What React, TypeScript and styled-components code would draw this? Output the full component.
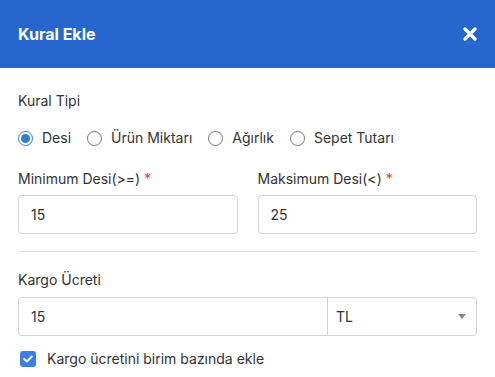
import React, { useState } from 'react';
import styled, { createGlobalStyle } from 'styled-components';

const GlobalStyle = createGlobalStyle`
  * { box-sizing: border-box; }
  body {
    margin: 0;
    background: #fff;
    font-family: Inter, "Noto Sans", Arial, sans-serif;
    color: #333;
  }
`;

const Modal = styled.div`
  width: 495px;
  height: 377px;
  overflow: hidden;
  background: #fff;
`;

const Header = styled.header`
  height: 68px;
  background: #2767cd;
  display: flex;
  align-items: center;
  justify-content: space-between;
  padding: 0 18px;
  color: #fff;
`;

const Title = styled.h2`
  margin: 0;
  font-size: 16px;
  font-weight: 700;
`;

const CloseButton = styled.button`
  all: unset;
  display: flex;
  width: 14px;
  height: 14px;
  cursor: pointer;
`;

const Body = styled.div`
  padding: 24px 18px 0;
`;

const FieldLabel = styled.div<{ $gap?: number }>`
  font-size: 14px;
  line-height: 18px;
  color: #333;
  margin-bottom: ${(p) => p.$gap ?? 8}px;
`;

const Required = styled.span`
  color: #e0393e;
  margin-left: 4px;
`;

const RadioRow = styled.div`
  display: flex;
  gap: 16px;
  margin-top: 19px;
  margin-bottom: 23px;
`;

const RadioOption = styled.label`
  display: flex;
  align-items: center;
  gap: 9px;
  font-size: 14px;
  line-height: 18px;
  cursor: pointer;
`;

const RadioCircle = styled.span<{ $checked: boolean }>`
  width: 15px;
  height: 15px;
  border-radius: 50%;
  border: 1px solid ${(p) => (p.$checked ? '#2f7de1' : '#777')};
  display: flex;
  align-items: center;
  justify-content: center;
  &::after {
    content: '';
    width: 9px;
    height: 9px;
    border-radius: 50%;
    background: ${(p) => (p.$checked ? '#2f7de1' : 'transparent')};
  }
`;

const TwoCols = styled.div`
  display: grid;
  grid-template-columns: 1fr 1fr;
  column-gap: 20px;
`;

const Field = styled.div``;

const TextInput = styled.input`
  width: 100%;
  height: 39px;
  border: 1px solid #d3d3d3;
  border-radius: 4px;
  padding: 0 12px;
  font: inherit;
  font-size: 14px;
  color: #333;
  outline: none;
`;

const Divider = styled.hr`
  border: 0;
  border-top: 1px solid #e2e2e2;
  margin: 17px 0 19px;
`;

const InputGroup = styled.div`
  display: flex;
  height: 39px;
  border: 1px solid #d3d3d3;
  border-radius: 4px;
`;

const GroupInput = styled.input`
  flex: 0 0 309px;
  border: 0;
  border-right: 1px solid #d3d3d3;
  padding: 0 12px;
  font: inherit;
  font-size: 14px;
  color: #333;
  outline: none;
  background: transparent;
`;

const SelectBox = styled.div`
  flex: 1;
  display: flex;
  align-items: center;
  justify-content: space-between;
  padding: 0 10px 0 8px;
  font-size: 14px;
  color: #333;
`;

const Caret = styled.span`
  width: 0;
  height: 0;
  border-left: 4px solid transparent;
  border-right: 4px solid transparent;
  border-top: 5px solid #888;
`;

const CheckRow = styled.label`
  display: flex;
  align-items: center;
  gap: 11px;
  margin-top: 14px;
  padding-left: 2px;
  font-size: 14px;
  cursor: pointer;
`;

const CheckBox = styled.span`
  width: 16px;
  height: 16px;
  border-radius: 3px;
  background: #3b7fe6;
  display: flex;
  align-items: center;
  justify-content: center;
`;

const RULE_TYPES = ['Desi', 'Ürün Miktarı', 'Ağırlık', 'Sepet Tutarı'];

export default function App() {
  const [ruleType, setRuleType] = useState('Desi');

  return (
    <Modal>
      <GlobalStyle />
      <Header>
        <Title>Kural Ekle</Title>
        <CloseButton aria-label="Kapat">
          <svg width="14" height="14" viewBox="0 0 14 14">
            <path d="M2 2 L12 12 M12 2 L2 12" stroke="#fff" strokeWidth="3.2" strokeLinecap="round" />
          </svg>
        </CloseButton>
      </Header>
      <Body>
        <FieldLabel>Kural Tipi</FieldLabel>
        <RadioRow>
          {RULE_TYPES.map((type) => (
            <RadioOption key={type} onClick={() => setRuleType(type)}>
              <RadioCircle $checked={ruleType === type} />
              {type}
            </RadioOption>
          ))}
        </RadioRow>
        <TwoCols>
          <Field>
            <FieldLabel $gap={7}>
              Minimum Desi(&gt;=)<Required>*</Required>
            </FieldLabel>
            <TextInput defaultValue="15" />
          </Field>
          <Field>
            <FieldLabel $gap={7}>
              Maksimum Desi(&lt;)<Required>*</Required>
            </FieldLabel>
            <TextInput defaultValue="25" />
          </Field>
        </TwoCols>
        <Divider />
        <FieldLabel>Kargo Ücreti</FieldLabel>
        <InputGroup>
          <GroupInput defaultValue="15" />
          <SelectBox>
            TL
            <Caret />
          </SelectBox>
        </InputGroup>
        <CheckRow>
          <CheckBox>
            <svg width="10" height="8" viewBox="0 0 10 8">
              <path d="M1.2 4 L3.8 6.5 L8.8 1.5" stroke="#fff" strokeWidth="2" fill="none" strokeLinecap="round" strokeLinejoin="round" />
            </svg>
          </CheckBox>
          Kargo ücretini birim bazında ekle
        </CheckRow>
      </Body>
    </Modal>
  );
}
